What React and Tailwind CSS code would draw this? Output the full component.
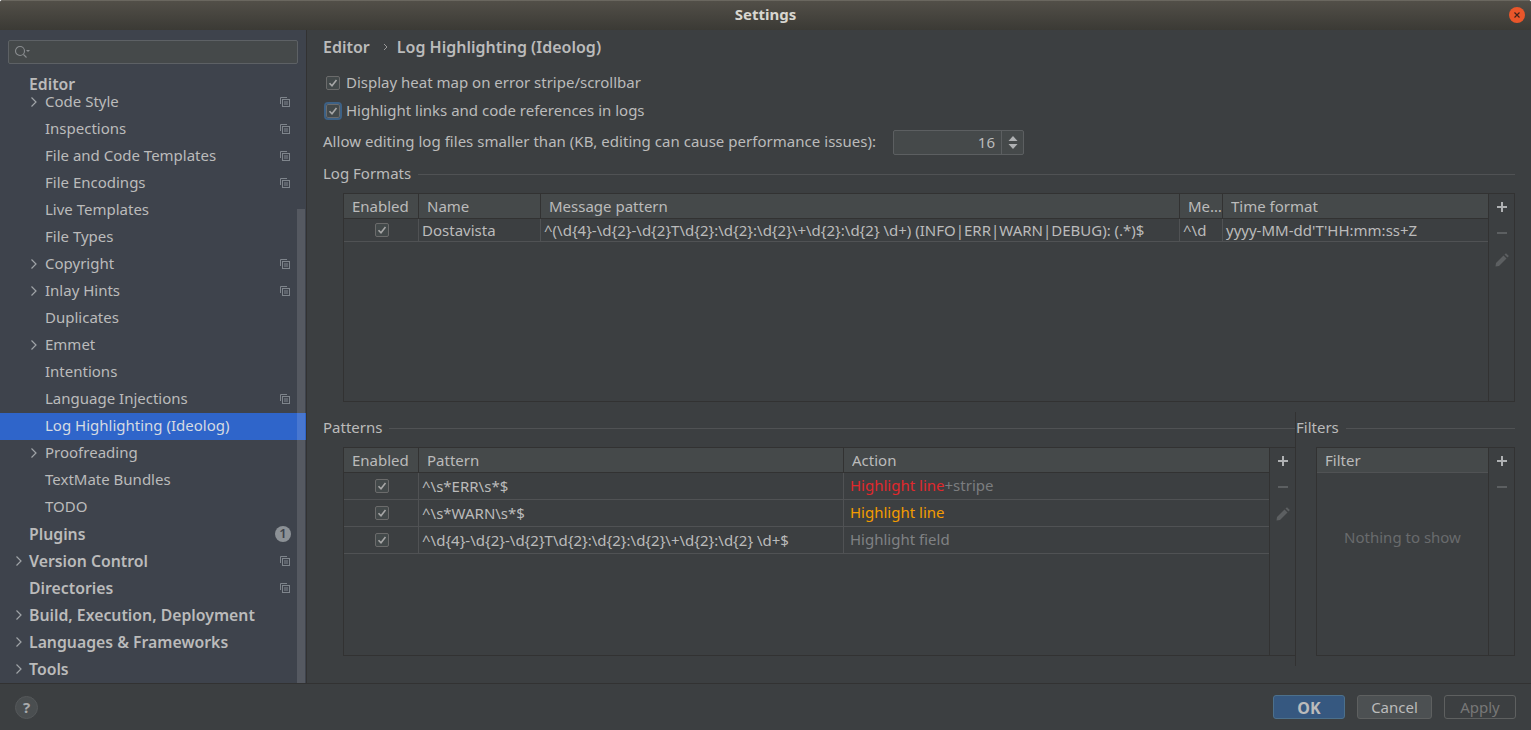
const font = "font-['Noto_Sans',sans-serif]"

function CopyIcon() {
  return (
    <svg width="10" height="10" viewBox="0 0 10 10" fill="none" stroke="#7f858c" strokeWidth="1" className="shrink-0">
      <path d="M0.5 7V0.5H7" />
      <rect x="2.5" y="2.5" width="7" height="7" />
      <path d="M4 5h4M4 7h4" />
    </svg>
  )
}

function Chevron({ color = "#a0a4a8" }) {
  return (
    <svg width="8" height="12" viewBox="0 0 8 12" fill="none" stroke={color} strokeWidth="1.2">
      <path d="M1.5 1.5L6 6L1.5 10.5" />
    </svg>
  )
}

function Row({ label, arrow, copy, bold, selected, badge }) {
  return (
    <div className={`relative h-[27px] flex items-center pr-[16px] pb-[2px] ${bold ? "font-semibold text-[15.8px]" : "text-[15px]"} ${selected ? "bg-[#2f65ca] text-[#d6dbe2]" : "text-[#bbbbbb]"}`}>
      {arrow && (
        <span className={`absolute top-[7px] ${bold ? "left-[15px]" : "left-[30px]"}`}>
          <Chevron />
        </span>
      )}
      <span className={`leading-[16px] ${bold ? "ml-[29px]" : "ml-[45px] pb-[2px]"}`}>{label}</span>
      {copy && <span className="ml-auto flex"><CopyIcon /></span>}
      {badge && (
        <span className="ml-auto -mr-[1px] w-4 h-4 rounded-full bg-[#8c9196] text-[#3e434c] text-[13px] flex items-center justify-center">{badge}</span>
      )}
    </div>
  )
}

function Check({ focused }) {
  return (
    <span className={`w-[14px] h-[14px] rounded-[2px] border border-[#6b6b6b] bg-[#43494a] flex items-center justify-center shrink-0 ${focused ? "outline-2 outline-[#3d6185]" : ""}`}>
      <svg width="10" height="10" viewBox="0 0 10 10" fill="none" stroke="#a7a7a7" strokeWidth="1.6">
        <path d="M1.5 5.2L4 7.8L8.5 2" />
      </svg>
    </span>
  )
}

function Header({ children, className = "", sep = true }) {
  return (
    <div className={`h-[24px] flex items-center pl-2 text-[15px] text-[#bbbbbb] shrink-0 ${sep ? "border-r border-[#323232]" : ""} ${className}`}>
      <span className="truncate">{children}</span>
    </div>
  )
}

function Toolbar({ edit }) {
  return (
    <div className="w-[26px] shrink-0 border-l border-[#323232] flex flex-col items-center pt-[7px] gap-[14px]">
      <svg width="12" height="12" viewBox="0 0 12 12" fill="#afb1b3"><path d="M5 1h2v4h4v2H7v4H5V7H1V5h4z" /></svg>
      <svg width="12" height="12" viewBox="0 0 12 12" fill="#5c5f61"><path d="M1 5h10v2H1z" /></svg>
      {edit && (
        <svg width="14" height="14" viewBox="0 0 14 14" fill="#5c5f61">
          <path d="M0.5 13.5L1 10L8.5 2.5L11.5 5.5L4 13Z" />
          <path d="M9.5 1.5L11 0.2L13.8 3L12.5 4.5Z" />
        </svg>
      )}
    </div>
  )
}

function GroupTitle({ children, className = "" }) {
  return (
    <div className={`flex items-center gap-[7px] text-[15px] text-[#bbbbbb] ${className}`}>
      <span className="pb-[2px]">{children}</span>
      <span className="flex-1 h-px bg-[#505254]" />
    </div>
  )
}

const sidebarItems = [
  { label: "Code Style", arrow: true, copy: true },
  { label: "Inspections", copy: true },
  { label: "File and Code Templates", copy: true },
  { label: "File Encodings", copy: true },
  { label: "Live Templates" },
  { label: "File Types" },
  { label: "Copyright", arrow: true, copy: true },
  { label: "Inlay Hints", arrow: true, copy: true },
  { label: "Duplicates" },
  { label: "Emmet", arrow: true },
  { label: "Intentions" },
  { label: "Language Injections", copy: true },
  { label: "Log Highlighting (Ideolog)", selected: true },
  { label: "Proofreading", arrow: true },
  { label: "TextMate Bundles" },
  { label: "TODO" },
  { label: "Plugins", bold: true, badge: "1" },
  { label: "Version Control", bold: true, arrow: true, copy: true },
  { label: "Directories", bold: true, copy: true },
  { label: "Build, Execution, Deployment", bold: true, arrow: true },
  { label: "Languages & Frameworks", bold: true, arrow: true },
  { label: "Tools", bold: true, arrow: true },
]

const patterns = [
  { p: "^\\s*ERR\\s*$", action: <><span className="text-[#e0282c]">Highlight line</span><span className="text-[#7b7d7f]">+stripe</span></> },
  { p: "^\\s*WARN\\s*$", action: <span className="text-[#f39c00]">Highlight line</span> },
  { p: "^\\d{4}-\\d{2}-\\d{2}T\\d{2}:\\d{2}:\\d{2}\\+\\d{2}:\\d{2} \\d+$", action: <span className="text-[#808284]">Highlight field</span> },
]

export default function App() {
  return (
    <div className={`w-[1531px] h-[730px] flex flex-col overflow-hidden bg-[#3c3f41] rounded-t-[3px] ${font}`}>
      <div className="h-[30px] shrink-0 flex items-center justify-center relative bg-gradient-to-b from-[#524f48] to-[#3b3a35] border-t border-[#6a675f] pb-[2px] text-[15px] font-bold text-[#d8d6d0]">
        Settings
        <span className="absolute right-[6px] top-[6px] w-4 h-4 rounded-full bg-[#e9562a] flex items-center justify-center">
          <svg width="8" height="8" viewBox="0 0 8 8" stroke="#40231a" strokeWidth="1.2"><path d="M1.5 1.5l5 5M6.5 1.5l-5 5" /></svg>
        </span>
      </div>

      <div className="flex-1 flex min-h-0 border-b border-[#323232]">
        <div className="relative w-[307px] shrink-0 bg-[#3e434c] border-r border-[#323232] overflow-hidden">
          <div className="mx-2 mt-[10px] h-[24px] border border-[#5d6165] rounded-[2px] bg-[#45494a] flex items-center pl-[5px]">
            <svg width="16" height="14" viewBox="0 0 16 14" fill="none" stroke="#8a8d90" strokeWidth="1.1">
              <circle cx="6" cy="6" r="4.5" />
              <path d="M9.5 9.5L12.5 12.5" />
              <path d="M12 5h4l-2 2z" fill="#8a8d90" stroke="none" />
            </svg>
          </div>
          <div className="mt-[15px] ml-[29px] h-[10px] flex items-center text-[15.8px] leading-[16px] font-semibold text-[#bbbbbb]">Editor</div>
          {sidebarItems.map((item) => (
            <Row key={item.label} {...item} />
          ))}
          <div className="absolute left-[297px] top-[179px] bottom-0 w-2 bg-white/12" />
        </div>

        <div className="flex-1 min-w-0 pl-4 pr-4 text-[15px] text-[#bbbbbb]">
          <div className="h-[36px] flex items-center font-semibold text-[16px] pb-[2px]">
            <span>Editor</span>
            <svg width="6" height="10" viewBox="0 0 6 10" fill="none" stroke="#999" strokeWidth="1" className="ml-[13px] mr-[8px]"><path d="M1 2l3 3-3 3" /></svg>
            <span>Log Highlighting (Ideolog)</span>
          </div>

          <div className="mt-[3px] h-[28px] flex items-center gap-[6px] pl-[3px]"><Check /> <span className="pb-[2px]">Display heat map on error stripe/scrollbar</span></div>
          <div className="h-[28px] flex items-center gap-[6px] pl-[3px]"><Check focused /> <span className="pb-[2px]">Highlight links and code references in logs</span></div>

          <div className="mt-[3px] h-[28px] flex items-center">
            <span className="w-[557px] pb-[2px] whitespace-nowrap tracking-[0.03px]">Allow editing log files smaller than (KB, editing can cause performance issues):</span>
            <div className="ml-[13px] w-[131px] h-[25px] border border-[#5c5f61] rounded-[2px] bg-[#45494a] flex">
              <span className="flex-1 text-right pr-[6px] leading-[23px]">16</span>
              <span className="w-[22px] border-l border-[#5c5f61] flex flex-col items-center justify-center gap-[3px]">
                <svg width="10" height="5" viewBox="0 0 10 5" fill="#afb1b3"><path d="M5 0l4.5 5h-9z" /></svg>
                <svg width="10" height="5" viewBox="0 0 10 5" fill="#afb1b3"><path d="M0.5 0h9L5 5z" /></svg>
              </span>
            </div>
          </div>

          <GroupTitle className="mt-[6px] h-[24px]">Log Formats</GroupTitle>

          <div className="ml-5 mt-[7px] h-[209px] border border-[#323232] flex">
            <div className="flex-1 min-w-0 flex flex-col">
              <div className="h-[25px] flex bg-[#45494a] border-b border-[#323232]">
                <Header className="w-[75px]">Enabled</Header>
                <Header className="w-[122px]">Name</Header>
                <Header className="w-[639px]">Message pattern</Header>
                <Header className="w-[43px]">Me...</Header>
                <Header className="flex-1" sep={false}>Time format</Header>
              </div>
              <div className="h-[23px] flex items-center border-b border-[#505254]">
                <div className="w-[75px] h-full border-r border-[#505254] pl-[2px] flex items-center justify-center"><Check /></div>
                <div className="w-[122px] h-full border-r border-[#505254] pl-[3px] flex items-center">Dostavista</div>
                <div className="w-[639px] h-full border-r border-[#505254] pl-[3px] flex items-center whitespace-nowrap overflow-hidden">{"^(\\d{4}-\\d{2}-\\d{2}T\\d{2}:\\d{2}:\\d{2}\\+\\d{2}:\\d{2} \\d+) (INFO|ERR|WARN|DEBUG): (.*)$"}</div>
                <div className="w-[43px] h-full border-r border-[#505254] pl-[3px] flex items-center">{"^\\d"}</div>
                <div className="flex-1 pl-[3px]">yyyy-MM-dd'T'HH:mm:ss+Z</div>
              </div>
            </div>
            <Toolbar edit />
          </div>

          <div className="mt-[10px] h-[254px] flex">
            <div className="w-[973px] shrink-0 flex flex-col border-r border-[#323232]">
              <GroupTitle className="h-[32px]">Patterns</GroupTitle>
              <div className="ml-5 h-[209px] border border-[#323232] border-r-0 flex mt-[3px]">
                <div className="flex-1 min-w-0 flex flex-col">
                  <div className="h-[25px] flex bg-[#45494a] border-b border-[#323232]">
                    <Header className="w-[75px]">Enabled</Header>
                    <Header className="w-[425px]">Pattern</Header>
                    <Header className="flex-1" sep={false}>Action</Header>
                  </div>
                  {patterns.map((row) => (
                    <div key={row.p} className="h-[27px] flex items-center border-b border-[#505254]">
                      <div className="w-[75px] h-full border-r border-[#505254] pl-[2px] flex items-center justify-center"><Check /></div>
                      <div className="w-[425px] h-full border-r border-[#505254] pl-[3px] flex items-center whitespace-nowrap">{row.p}</div>
                      <div className="flex-1 pl-[6px] pb-[2px]">{row.action}</div>
                    </div>
                  ))}
                </div>
                <Toolbar edit />
              </div>
            </div>

            <div className="flex-1 min-w-0 flex flex-col">
              <GroupTitle className="h-[32px]">Filters</GroupTitle>
              <div className="ml-5 h-[209px] border border-[#323232] flex mt-[3px]">
                <div className="flex-1 min-w-0 flex flex-col">
                  <div className="h-[25px] flex bg-[#45494a] border-b border-[#505254]">
                    <Header className="flex-1" sep={false}>Filter</Header>
                  </div>
                  <div className="flex-1 flex items-center justify-center text-[#696b6d] pb-[54px]">Nothing to show</div>
                </div>
                <Toolbar />
              </div>
            </div>
          </div>
        </div>
      </div>

      <div className="h-[46px] shrink-0 flex items-center pl-[15px] pr-[15px] text-[15px]">
        <span className="w-[23px] h-[23px] rounded-full bg-[#4a4e50] border border-[#55585a] text-[#a8aaac] font-bold text-[15px] flex items-center justify-center">?</span>
        <button className="ml-auto w-[72px] h-[24px] rounded-[3px] bg-[#365880] border border-[#4c708c] text-[#bbbbbb] font-bold text-[16px]">OK</button>
        <button className="ml-[12px] w-[75px] h-[24px] rounded-[3px] bg-[#4c5052] border border-[#5e6060] text-[#bbbbbb]">Cancel</button>
        <button className="ml-[12px] w-[72px] h-[24px] rounded-[3px] border border-[#5e6060] text-[#777777]">Apply</button>
      </div>
    </div>
  )
}
